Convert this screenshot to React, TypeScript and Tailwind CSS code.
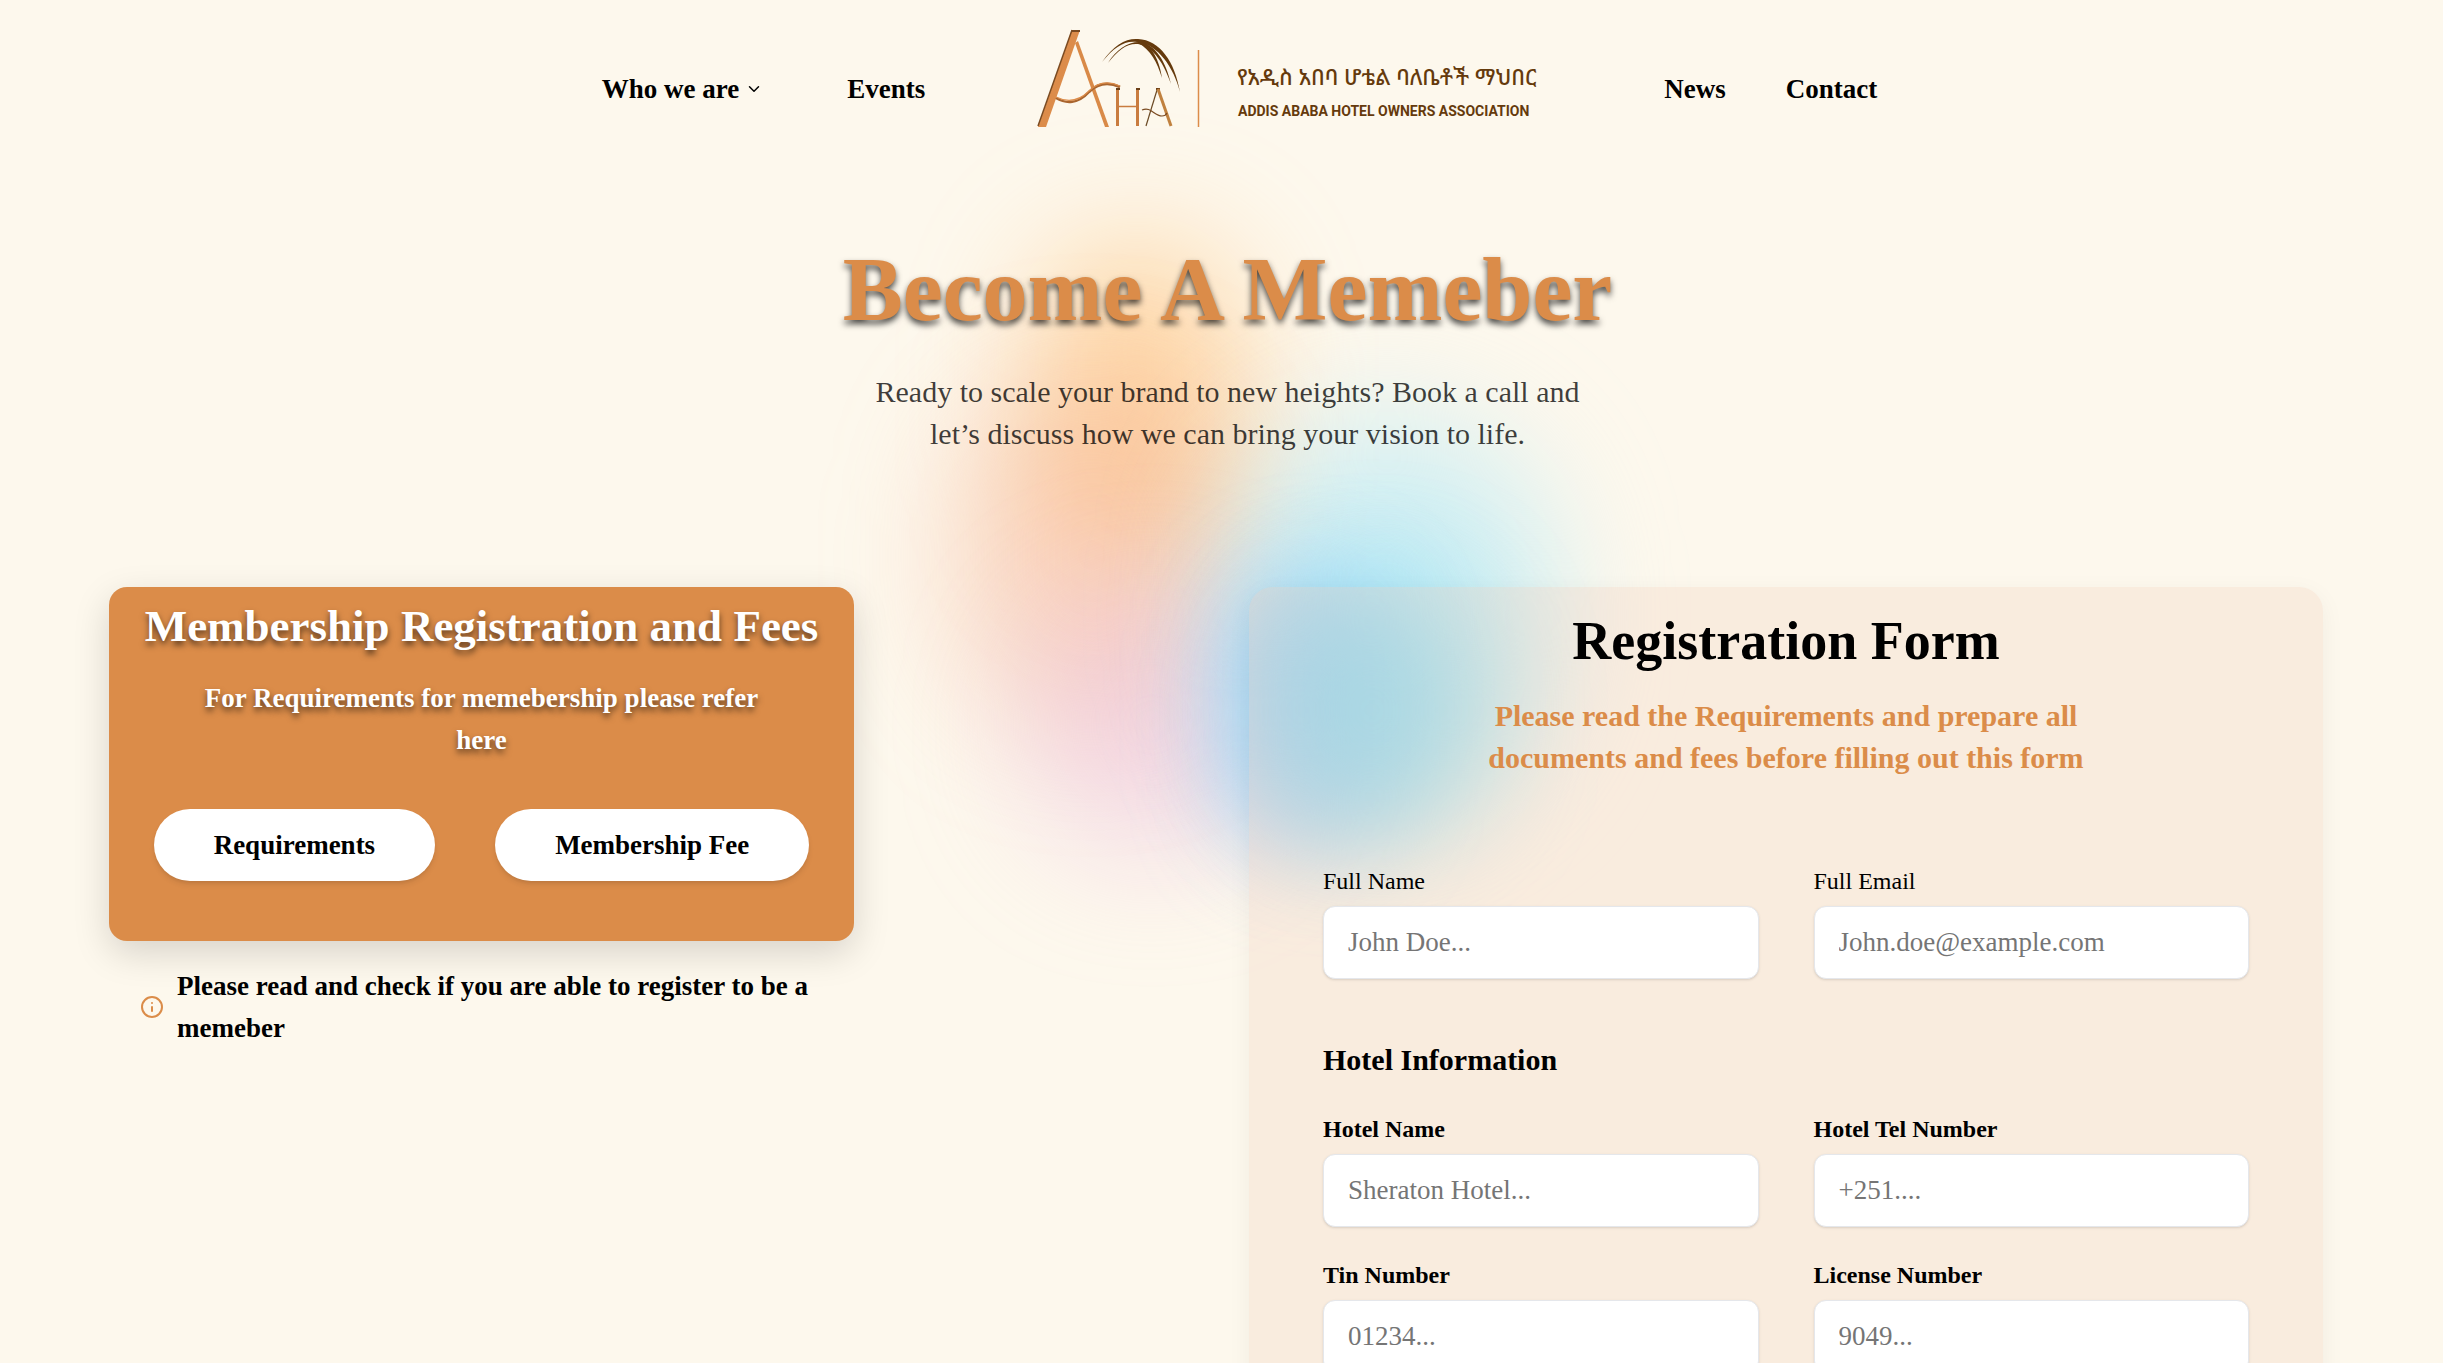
import { ChevronDown, Info } from "lucide-react";

const Logo = () => (
  <svg viewBox="0 0 500 118" className="h-[118px] w-[500px] shrink-0 overflow-visible" role="img" aria-label="Addis Ababa Hotel Owners Association">
    <g fill="none">
      <path d="M34 0 L42 0 L8 97 L0 97 Z" fill="#dc8c4a" />
      <path d="M34 0 L0 96" stroke="#7a4a20" strokeWidth="1.5" />
      <path d="M34 1 H42" stroke="#7a4a20" strokeWidth="2" />
      <path d="M37 13 L40 11 L71 97 L67 97 Z" fill="#d98a48" />
      <path d="M18 68 C28 74 40 74 51 62 C61 52 71 52 82 57" stroke="#a9652f" strokeWidth="2.5" />
      <path d="M18 67 C28 72 40 72 51 61 C61 51 71 51 82 56" stroke="#dc8c4a" strokeWidth="1.2" />
      <path d="M79.500 58 V96 M99.500 58 V96" stroke="#c97c3f" strokeWidth="3" />
      <path d="M80 76.500 H99" stroke="#c97c3f" strokeWidth="1.500" />
      <path d="M78 59 H82 M98 59 H102 M118 59 H122" stroke="#6b3f17" strokeWidth="2" />
      <path d="M119 60 L108 96" stroke="#6b4a25" strokeWidth="1.200" />
      <path d="M120 59 L133 96" stroke="#c0813f" strokeWidth="3" />
      <path d="M104 80 C113 76 116 86 124 86 C126 86 128 85 129 83" stroke="#7a4a20" strokeWidth="1.200" />
    </g>
    <g fill="#653a0c">
      <path d="M64 32 C76 15 88 8 100 9 C122 10 137 32 142 62 C136 38 120 14 99 12 C87 10 76 17 64 32 Z" />
      <path d="M70 33 C78 20 89 12 101 12 C117 13 128 32 133 54 C126 34 116 17 100 14 C89 13 80 20 70 33 Z" />
      <path d="M100 10 C114 14 122 32 124 48 C119 32 113 20 100 13 Z" />
    </g>
    <path d="M160.500 20 V97" stroke="#dc8c4a" strokeWidth="1.500" />
    <text x="199" y="55" fontSize="22" fontWeight="500" fill="#653a0c" fontFamily="'Noto Sans Ethiopic', 'Noto Sans', sans-serif">
      የአዲስ አበባ ሆቴል ባለቤቶች ማህበር
    </text>
    <text x="200" y="86" fontSize="14" fontWeight="700" fill="#653a0c" fontFamily="Roboto, sans-serif">
      ADDIS ABABA HOTEL OWNERS ASSOCIATION
    </text>
  </svg>
);

type FieldProps = {
  id: string;
  label: string;
  placeholder: string;
  type?: string;
  bold?: boolean;
};

const Field = ({ id, label, placeholder, type = "text", bold = false }: FieldProps) => (
  <div className="flex flex-col gap-[7px]">
    <label htmlFor={id} className={bold ? "text-2xl leading-9 font-bold" : "text-2xl leading-9"}>
      {label}
    </label>
    <input
      id={id}
      type={type}
      placeholder={placeholder}
      className="h-[73px] w-full rounded-xl border border-gray-200 bg-white px-6 text-[27px] shadow-sm placeholder:text-[#757575]"
    />
  </div>
);

const Header = () => (
  <header className="pt-[30px] pl-9">
    <nav className="flex items-center justify-center text-[27px] leading-[42px] font-bold">
      <button type="button" className="flex items-center gap-1.5">
        Who we are
        <ChevronDown size={18} strokeWidth={2} />
      </button>
      <a href="#events" className="ml-[84px]">Events</a>
      <a href="#home" className="mr-[126px] ml-[113px]"><Logo /></a>
      <a href="#news">News</a>
      <a href="#contact" className="ml-[60px]">Contact</a>
    </nav>
  </header>
);

// soft colour cloud behind the hero and the form
const Glow = () => (
  <div aria-hidden="true" className="pointer-events-none absolute top-[150px] left-1/2 -z-10 h-[850px] w-[900px] -translate-x-1/2">
    <div className="absolute top-[90px] left-[260px] h-[330px] w-[210px] rounded-full bg-[#ffb765]/50 blur-[60px]" />
    <div className="absolute top-[230px] left-[180px] h-[350px] w-[280px] rounded-full bg-[#f5a98c]/40 blur-[60px]" />
    <div className="absolute top-[440px] left-[250px] h-[270px] w-[260px] rounded-full bg-[#e8b1dc]/40 blur-[60px]" />
    <div className="absolute top-[270px] left-[450px] h-[390px] w-[330px] rounded-full bg-[#b5eaf8]/65 blur-[60px]" />
    <div className="absolute top-[420px] left-[450px] h-[290px] w-[170px] rounded-full bg-[#8cc4fa]/50 blur-[45px]" />
    <div className="absolute top-[430px] left-[490px] h-[260px] w-[220px] rounded-full bg-[#7fdcf2]/65 blur-[55px]" />
  </div>
);

export default function App() {
  return (
    <main className="relative isolate h-screen overflow-hidden bg-[#fdf8ed] font-['Liberation_Serif',serif] text-black">
      <Glow />
      <Header />

      <section className="flex flex-col items-center gap-9 pt-[97px] pl-3 text-center">
        <h1 className="text-[90px] leading-[90px] font-bold text-[#db8c49] [text-shadow:0_4px_6px_rgba(0,0,0,0.7)]">
          Become A Memeber
        </h1>
        <p className="max-w-[720px] text-3xl leading-[42px] text-black/75">
          Ready to scale your brand to new heights? Book a call and let’s discuss how we can bring your vision to life.
        </p>
      </section>

      <section className="grid grid-cols-[745fr_1074fr] items-start gap-x-[395px] pt-[132px] pr-[120px] pl-[109px]">
        <div>
          <div className="rounded-[18px] bg-[#db8c49] px-6 pt-3 pb-[60px] text-center font-bold shadow-[0_12px_36px_rgba(0,0,0,0.15)]">
            <h2 className="text-[45px] leading-[54px] text-white [text-shadow:0_4px_6px_rgba(0,0,0,0.6)]">
              Membership Registration and Fees
            </h2>
            <p className="mx-auto mt-6 max-w-[600px] text-[27px] leading-[42px] text-white [text-shadow:0_4px_6px_rgba(0,0,0,0.6)]">
              For Requirements for memebership please refer here
            </p>
            <div className="mt-12 flex justify-center gap-[60px] text-[27px]">
              <button type="button" className="h-[72px] rounded-full bg-white px-[60px] shadow-md">Requirements</button>
              <button type="button" className="h-[72px] rounded-full bg-white px-[60px] shadow-md">Membership Fee</button>
            </div>
          </div>
          <div className="mt-6 flex items-center gap-[13px] px-[31px]">
            <Info size={24} strokeWidth={2} className="shrink-0 text-[#db8c49]" />
            <p className="text-[27px] leading-[42px] font-bold">
              Please read and check if you are able to register to be a memeber
            </p>
          </div>
        </div>

        <form className="rounded-3xl bg-[#f1c8b4]/25 px-[74px] pt-6 pb-20 shadow-[0_6px_24px_rgba(0,0,0,0.05)]">
          <div className="text-center font-bold">
            <h2 className="text-[54px] leading-[60px]">Registration Form</h2>
            <p className="mx-auto mt-6 max-w-[640px] text-3xl leading-[42px] text-[#db8c49]">
              Please read the Requirements and prepare all documents and fees before filling out this form
            </p>
          </div>
          <div className="mt-[84px] grid grid-cols-2 gap-x-[55px]">
            <Field id="name" label="Full Name" placeholder="John Doe..." />
            <Field id="email" type="email" label="Full Email" placeholder="John.doe@example.com" />
          </div>
          <h3 className="mt-[60px] text-3xl leading-[42px] font-bold">Hotel Information</h3>
          <div className="mt-[30px] grid grid-cols-2 gap-x-[55px] gap-y-[30px]">
            <Field bold id="hotel" label="Hotel Name" placeholder="Sheraton Hotel..." />
            <Field bold id="tel" type="tel" label="Hotel Tel Number" placeholder="+251...." />
            <Field bold id="tin" label="Tin Number" placeholder="01234..." />
            <Field bold id="license" label="License Number" placeholder="9049..." />
          </div>
        </form>
      </section>
    </main>
  );
}
